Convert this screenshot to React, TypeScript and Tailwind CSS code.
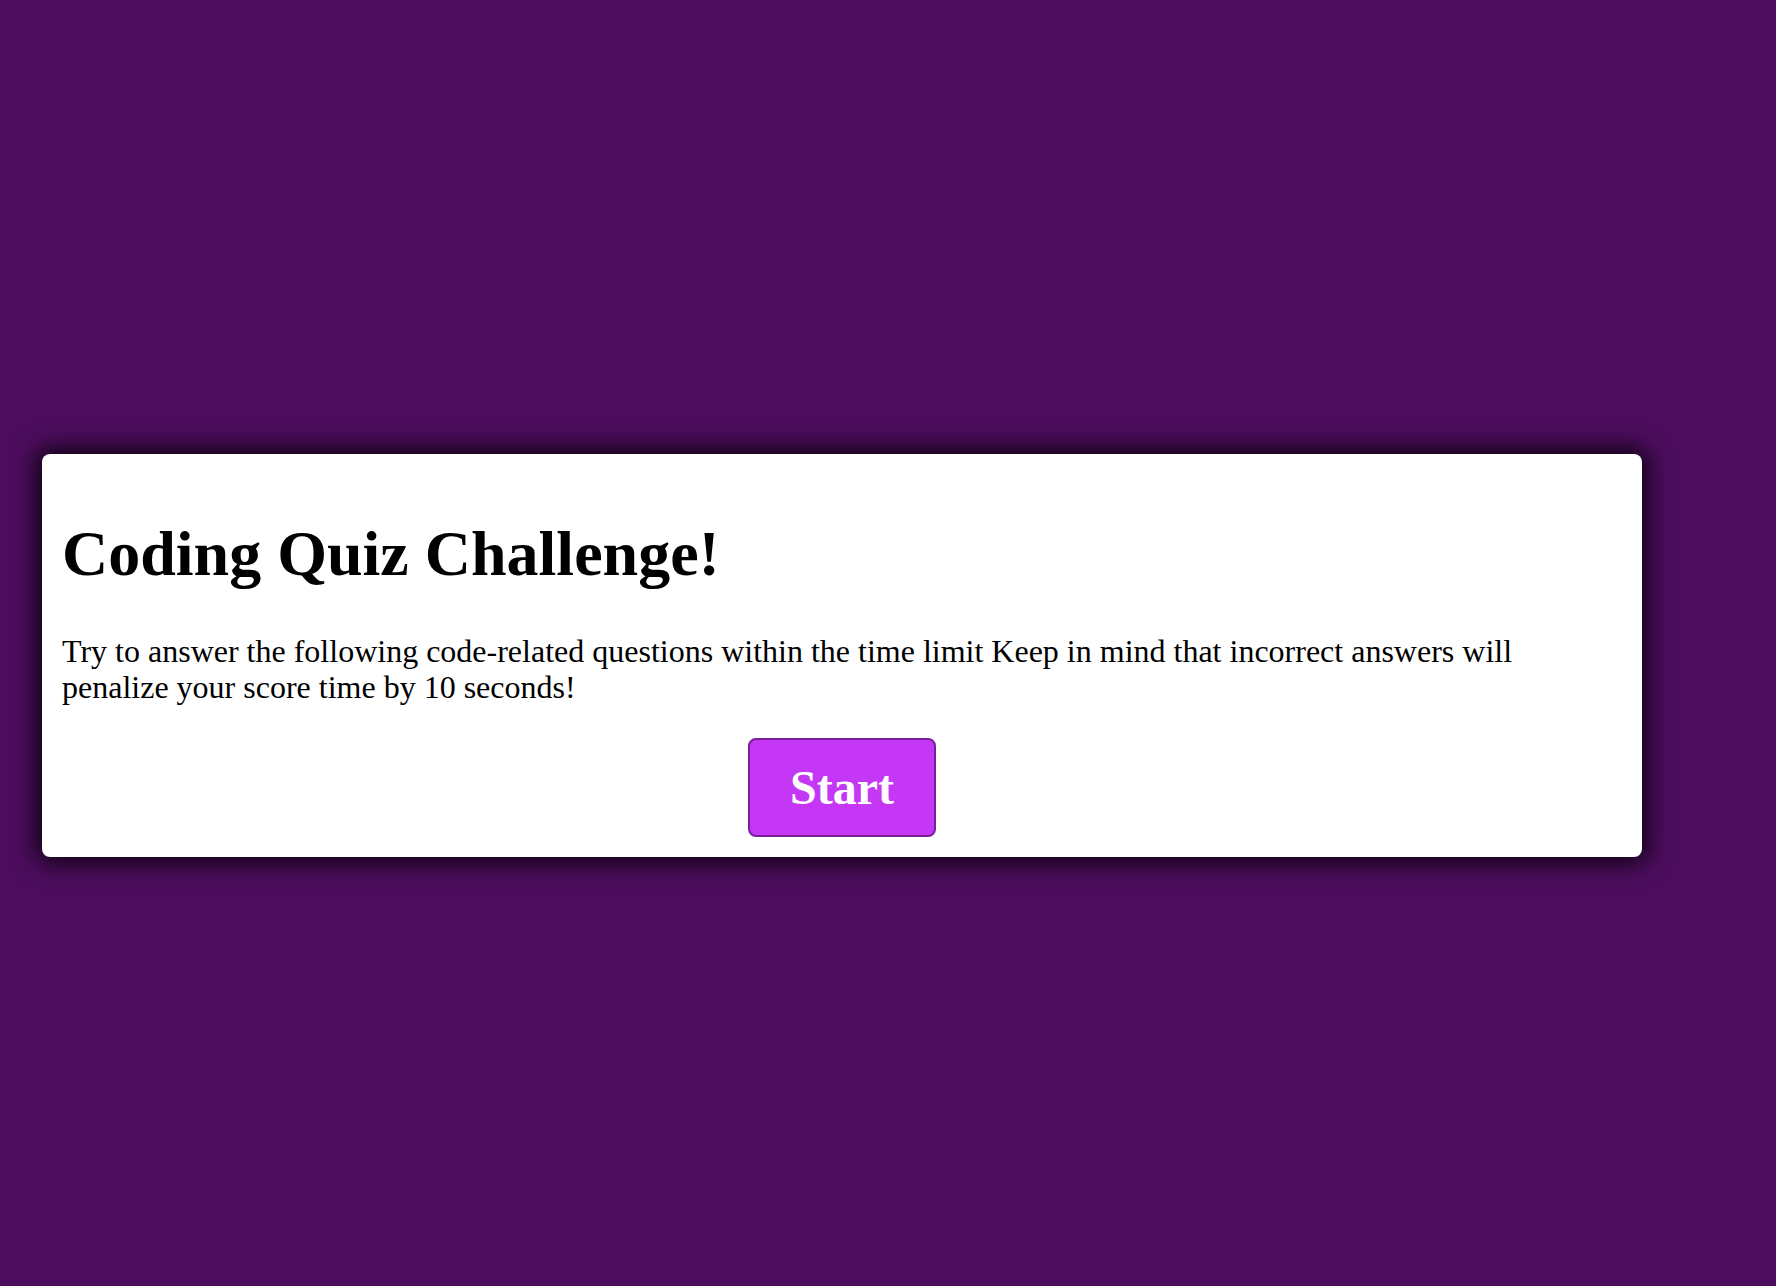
const App = () => {
  return (
    <div className="min-h-[1286px] w-full bg-[#4d0d5e] pt-[454px] font-['Liberation_Serif',serif]">
      <div className="ml-[42px] w-[1600px] h-[403px] bg-white rounded-lg shadow-[0_0_24px_6px_rgba(0,0,0,0.85)] px-5 pt-[68px]">
        <h1 className="text-[64px] font-bold leading-none text-black">Coding Quiz Challenge!</h1>
        <p className="mt-[47px] text-[32px] leading-[36px] text-black">
          Try to answer the following code-related questions within the time limit Keep in mind that incorrect answers will penalize your score time by 10 seconds!
        </p>
        <div className="flex justify-center mt-[33px]">
          <button className="w-[188px] h-[99px] bg-[#c437f5] border-2 border-[#7a1e9c] rounded-lg text-white text-[48px] font-bold cursor-pointer">
            Start
          </button>
        </div>
      </div>
    </div>
  )
}

export default App
